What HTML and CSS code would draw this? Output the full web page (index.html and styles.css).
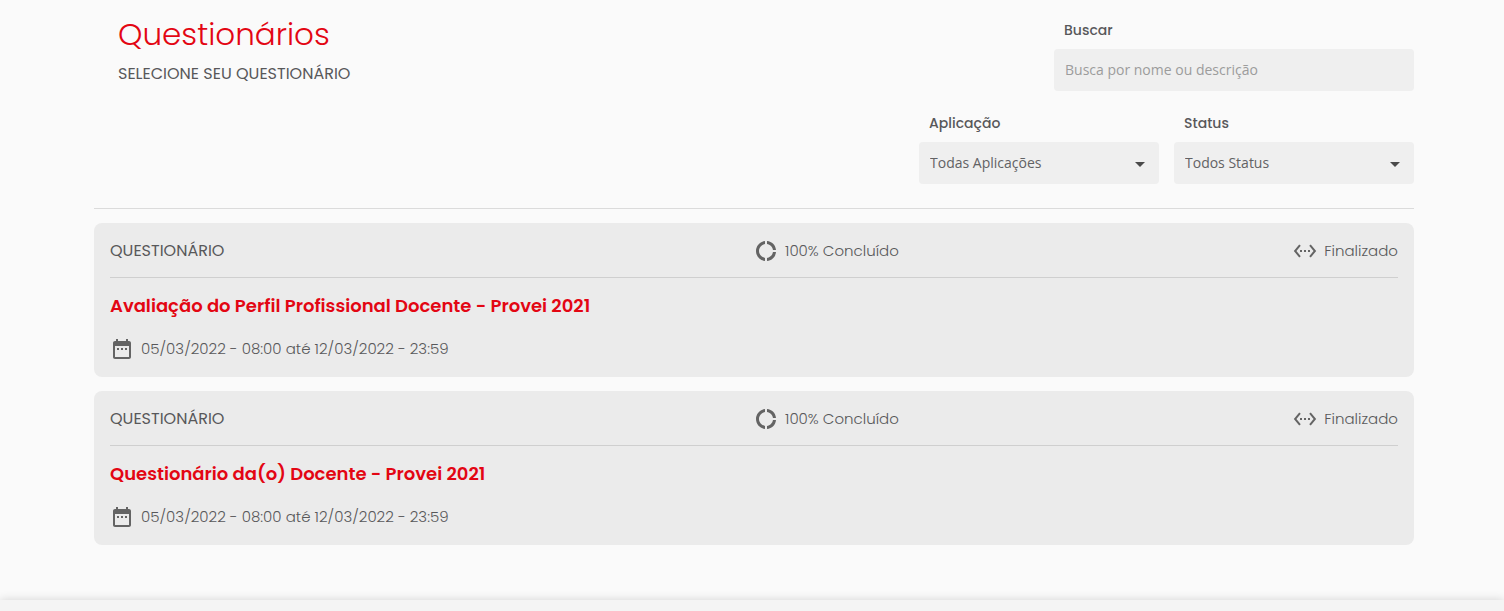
FILE: index.html
```html
<!DOCTYPE html>
<html lang="pt-BR">
<head>
<meta charset="utf-8">
<meta name="viewport" content="width=device-width, initial-scale=1">
<title>Questionários</title>
<link rel="stylesheet" href="styles.css">
</head>
<body>
<svg class="sprite" aria-hidden="true">
  <symbol id="progress" viewBox="0 0 24 24"><path d="M11 5.08V2c-5 .5-9 4.81-9 10s4 9.5 9 10v-3.08c-3-.48-6-3.4-6-6.92s3-6.44 6-6.92zM18.97 11H22c-.47-5-4-8.53-9-9v3.08C16 5.51 18.54 8 18.97 11zM13 18.92V22c5-.47 8.53-4 9-9h-3.03c-.43 3-2.97 5.49-5.97 5.92z"/></symbol>
  <symbol id="state" viewBox="0 0 24 24"><path d="M7.77 6.76L6.23 5.48.82 12l5.41 6.52 1.54-1.28L3.42 12l4.35-5.24zM7 13h2v-2H7v2zm10-2h-2v2h2v-2zm-6 2h2v-2h-2v2zm6.77-7.52l-1.54 1.28L20.58 12l-4.35 5.24 1.54 1.28L23.18 12l-5.41-6.52z"/></symbol>
  <symbol id="calendar" viewBox="0 0 24 24"><path d="M9 11H7v2h2v-2zm4 0h-2v2h2v-2zm4 0h-2v2h2v-2zm2-7h-1V2h-2v2H8V2H6v2H5c-1.11 0-1.99.9-1.99 2L3 20c0 1.1.89 2 2 2h14c1.1 0 2-.9 2-2V6c0-1.1-.9-2-2-2zm0 16H5V9h14v11z"/></symbol>
</svg>
<main class="page">
  <header class="top">
    <div class="heading">
      <h1 class="title">Questionários</h1>
      <p class="subtitle">SELECIONE SEU QUESTIONÁRIO</p>
    </div>
    <form class="filters">
      <div class="field field-search">
        <label class="label" for="search">Buscar</label>
        <input class="control" id="search" type="text" placeholder="Busca por nome ou descrição">
      </div>
      <div class="field">
        <label class="label" for="application">Aplicação</label>
        <div class="select-box">
          <select class="control" id="application"><option>Todas Aplicações</option></select>
          <svg class="arrow" viewBox="0 0 10 5" aria-hidden="true"><path d="M0 0h10L5 5z"/></svg>
        </div>
      </div>
      <div class="field">
        <label class="label" for="status">Status</label>
        <div class="select-box">
          <select class="control" id="status"><option>Todos Status</option></select>
          <svg class="arrow" viewBox="0 0 10 5" aria-hidden="true"><path d="M0 0h10L5 5z"/></svg>
        </div>
      </div>
    </form>
  </header>
  <section class="list">
    <article class="card">
      <div class="card-head">
        <span class="kind">QUESTIONÁRIO</span>
        <div class="facts">
          <span class="fact"><svg class="icon"><use href="#progress"/></svg>100% Concluído</span>
          <span class="fact"><svg class="icon"><use href="#state"/></svg>Finalizado</span>
        </div>
      </div>
      <h2 class="name">Avaliação do Perfil Profissional Docente - Provei 2021</h2>
      <p class="period"><svg class="icon"><use href="#calendar"/></svg>05/03/2022 - 08:00 até 12/03/2022 - 23:59</p>
    </article>
    <article class="card">
      <div class="card-head">
        <span class="kind">QUESTIONÁRIO</span>
        <div class="facts">
          <span class="fact"><svg class="icon"><use href="#progress"/></svg>100% Concluído</span>
          <span class="fact"><svg class="icon"><use href="#state"/></svg>Finalizado</span>
        </div>
      </div>
      <h2 class="name">Questionário da(o) Docente - Provei 2021</h2>
      <p class="period"><svg class="icon"><use href="#calendar"/></svg>05/03/2022 - 08:00 até 12/03/2022 - 23:59</p>
    </article>
  </section>
</main>
<footer class="footer"></footer>
</body>
</html>
```
FILE: styles.css
```css
* { box-sizing: border-box; }

body {
  margin: 0;
  min-height: 100vh;
  display: flex;
  flex-direction: column;
  background: #fafafa;
  color: #58585a;
  font-family: Poppins, Inter, "Liberation Sans", sans-serif;
}

h1, h2, p { margin: 0; }

.sprite { display: none; }

.page {
  flex: 1;
  padding: 16px 90px 48px 94px;
}

.top {
  display: flex;
  justify-content: space-between;
  padding-bottom: 24px;
  border-bottom: 1px solid #dbdbdb;
}

.heading { padding-left: 24px; }

.title {
  color: #e30613;
  font-size: 31px;
  font-weight: 300;
  line-height: 36px;
}

.subtitle {
  margin-top: 10px;
  font-size: 16px;
  line-height: 24px;
}

.filters {
  display: grid;
  grid-template-columns: 240px 240px;
  gap: 18px 15px;
}

.field-search {
  grid-column: 1 / -1;
  justify-self: end;
  width: 360px;
}

.label {
  display: block;
  padding: 4px 10px 9px;
  font-size: 14px;
  font-weight: 500;
  line-height: 20px;
}

.control {
  display: block;
  width: 100%;
  height: 42px;
  padding: 0 10px 2px 11px;
  border: 0;
  border-radius: 4px;
  background: #efefef;
  color: #626264;
  font-family: "Open Sans", sans-serif;
  font-size: 14px;
  appearance: none;
}

.control::placeholder {
  color: #9c9c9c;
  font-weight: 400;
  opacity: 1;
}

.select-box { position: relative; }

.arrow {
  position: absolute;
  top: 20px;
  right: 14px;
  width: 10px;
  height: 5px;
  fill: #4a4a4a;
  pointer-events: none;
}

.list {
  display: grid;
  gap: 14px;
  padding-top: 14px;
}

.card {
  padding: 16px;
  border-radius: 8px;
  background: #ebebeb;
}

.card-head {
  display: grid;
  grid-template-columns: 1fr 1fr;
  align-items: center;
  padding-bottom: 14px;
  border-bottom: 1px solid #cfcfcf;
}

.kind {
  font-size: 16px;
  line-height: 24px;
}

.facts {
  display: flex;
  justify-content: space-between;
}

.fact, .period {
  display: flex;
  align-items: center;
  gap: 7px;
  font-size: 15px;
  font-weight: 300;
  line-height: 24px;
}

.icon {
  width: 24px;
  height: 24px;
  fill: #646464;
}

.name {
  margin-top: 14px;
  color: #e30613;
  font-size: 18px;
  font-weight: 600;
  line-height: 28px;
}

.period { margin-top: 17px; }

.footer {
  height: 11px;
  background: #f4f4f4;
  box-shadow: 0 0 10px rgba(0, 0, 0, 0.16);
}
```
